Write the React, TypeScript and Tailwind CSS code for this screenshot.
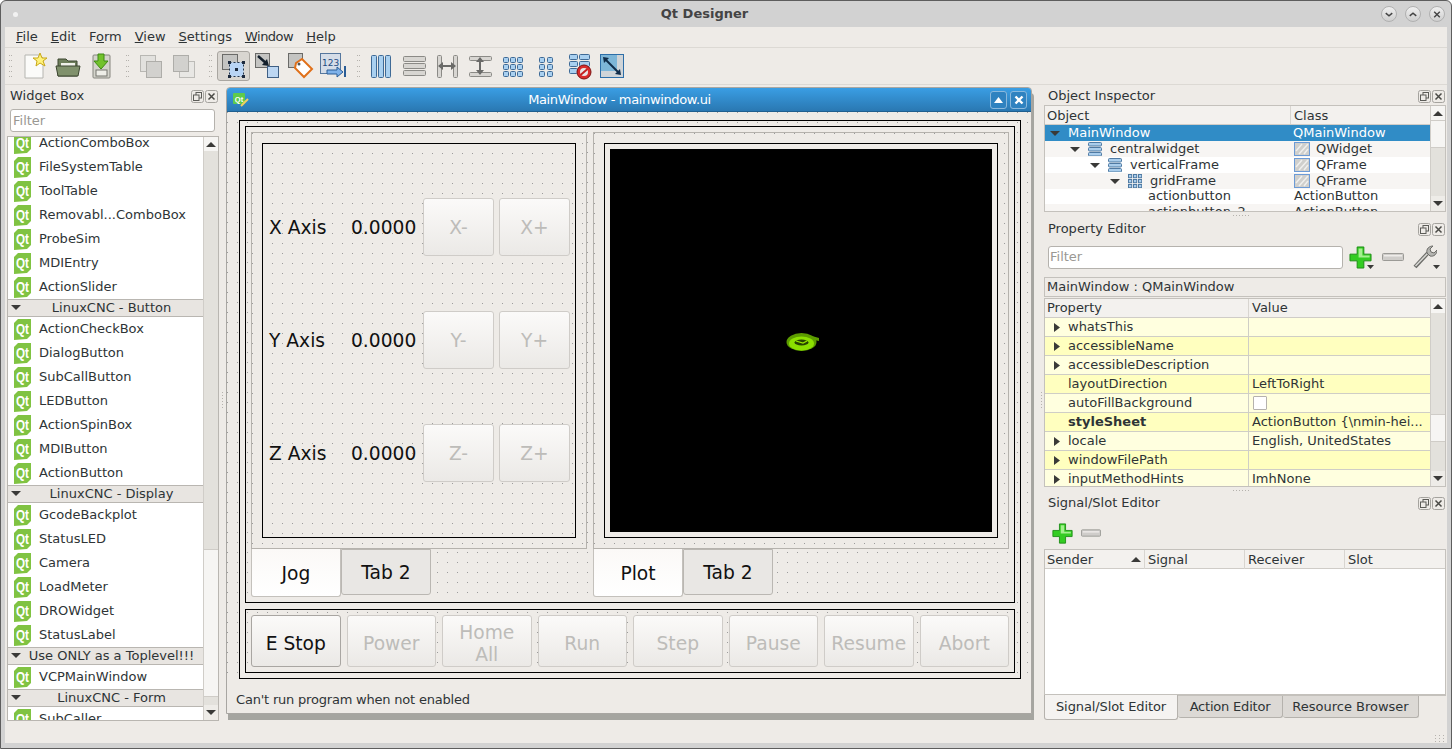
import type { ReactNode } from 'react';

const dots = 'bg-[radial-gradient(circle_at_0.5px_0.5px,#9c9c9c_0.6px,transparent_0.7px)] bg-[length:10px_10px]';

function QtIcon() {
  return (
    <svg width="17" height="21" viewBox="0 0 17 21" className="shrink-0">
      <polygon points="4,0 17,0 17,16 13,20 0,21 0,4" fill="#80c342" />
      <text x="8.5" y="15" textAnchor="middle" fontSize="14" fontWeight="700" fill="#fff" fontFamily="'Liberation Sans'" textLength="13" lengthAdjust="spacingAndGlyphs">Qt</text>
    </svg>
  );
}

function Tri({ dir = 'down' }: { dir?: 'down' | 'right' | 'up' }) {
  const pts = dir === 'down' ? '0,1 10,1 5,6' : dir === 'up' ? '0,6 10,6 5,1' : '2,0 8,4.5 2,9';
  return (
    <svg width="10" height={dir === 'right' ? 9 : 7} viewBox={dir === 'right' ? '0 0 10 9' : '0 0 10 7'} className="shrink-0">
      <polygon points={pts} fill="#3a3a38" />
    </svg>
  );
}

function DropTri() {
  return (
    <svg width="7" height="4" viewBox="0 0 7 4" className="shrink-0">
      <polygon points="0,0 7,0 3.500,4" fill="#3a3a38" />
    </svg>
  );
}

function DockTitle({ title, className }: { title: string; className: string }) {
  return (
    <div className={`flex items-center justify-between text-[13px] text-[#2e3436] ${className}`}>
      <span>{title}</span>
      <span className="flex gap-[1px]">
        <svg width="13" height="13" viewBox="0 0 13 13" fill="none" stroke="#5c5c58">
          <rect x="0.5" y="0.5" width="12" height="12" rx="2" stroke="#a5a39e" />
          <rect x="5" y="2.5" width="5.5" height="5.5" />
          <rect x="2.5" y="5" width="5.5" height="5.5" fill="#eeebe7" />
        </svg>
        <svg width="13" height="13" viewBox="0 0 13 13" fill="none" stroke="#4a4a46">
          <rect x="0.5" y="0.5" width="12" height="12" rx="2" stroke="#a5a39e" />
          <path d="M3.5 3.5l6 6M9.5 3.5l-6 6" strokeWidth="1.5" />
        </svg>
      </span>
    </div>
  );
}

function ScrollBar({ before, thumb, after }: { before: string; thumb: string; after: string }) {
  return (
    <div className="flex w-[15px] shrink-0 flex-col border-l border-[#d0cdc8] bg-[#e3e1dc]">
      <div className="flex h-[14px] shrink-0 items-center justify-center bg-[#f6f5f3]"><Tri dir="up" /></div>
      <div className={before} />
      <div className={`border-y border-[#cfccc7] bg-[#f6f5f3] ${thumb}`} />
      <div className={after} />
      <div className="flex h-[15px] shrink-0 items-center justify-center bg-[#eeece8]"><Tri /></div>
    </div>
  );
}

function WidgetRow({ name }: { name: string }) {
  return (
    <div className="flex h-[24px] shrink-0 items-center gap-[8px] pl-[6px]">
      <QtIcon />
      <span className="text-[13px] text-[#2e3436]">{name}</span>
    </div>
  );
}

function WidgetHeader({ name }: { name: string }) {
  return (
    <div className="relative flex h-[18px] shrink-0 items-center justify-center border-y border-[#b9b6b1] bg-[#e8e5e1] pl-[12px] text-[13px] text-[#2e3436]">
      <span className="absolute left-[3px] top-[4px]"><Tri /></span>
      <span>{name}</span>
    </div>
  );
}

function Page({ children }: { children: ReactNode }) {
  return <svg width="28" height="28" viewBox="0 0 28 28" className="shrink-0">{children}</svg>;
}

const sq = (x: number, y: number, s = 16) => (
  <rect x={x + 0.5} y={y + 0.5} width={s} height={s} fill="#c4c4c2" stroke="#6a6a68" />
);

const blueBlock = (x: number, y: number, w: number, h: number, k: number) => (
  <rect key={k} x={x + 0.5} y={y + 0.5} width={w} height={h} rx="1" fill="#a9d0f0" stroke="#3f6a96" />
);
const grayBar = (x: number, y: number, w: number, h: number, k: number) => (
  <rect key={k} x={x + 0.5} y={y + 0.5} width={w} height={h} rx="1" fill="#d8d6d2" stroke="#8b8a86" />
);

function PlusIcon({ size = 24 }: { size?: number }) {
  return (
    <svg width={size} height={size} viewBox="0 0 24 24" className="shrink-0">
      <path d="M8.5 1h7v7.5H23v7h-7.5V23h-7v-7.5H1v-7h7.5z" fill="#33cc22" stroke="#1c8c14" />
      <path d="M10 2.5h4V10h7.500v2H10z" fill="#a4f08e" />
    </svg>
  );
}

function MinusIcon({ w = 22 }: { w?: number }) {
  return (
    <svg width={w} height="8" viewBox="0 0 22 8" className="shrink-0">
      <rect x="0.500" y="0.500" width="21" height="7" rx="1" fill="#cfcdca" stroke="#9b9a96" />
      <rect x="2" y="2" width="18" height="1.500" fill="#eeece9" />
    </svg>
  );
}

function Grip({ className }: { className: string }) {
  return (
    <div className={`grid h-[22px] w-[4px] shrink-0 grid-cols-2 content-between ${className}`}>
      {[0, 1, 2, 3, 4, 5, 6, 7, 8, 9].map((i) => <span key={i} className="h-[1px] w-[1px] bg-[#b5b2ad]" />)}
    </div>
  );
}

function Toolbar() {
  const slot = (el: ReactNode, sel = false) => (
    <div className={`flex h-[30px] w-[33px] shrink-0 items-center justify-center rounded-[3px] ${sel ? 'border border-[#a9a6a1] bg-[#d9d6d1]' : ''}`}>{el}</div>
  );
  return (
    <div className="flex h-[38px] shrink-0 items-center border-y border-[#dcd9d4]">
      <Grip className="ml-[4px] mr-[5px]" />
      {slot(<Page>
        <path d="M4 3h15l3 3v20H4z" fill="#fbfbf9" stroke="#b5b5b0" />
        <polygon points="19,1 21,6 26,6 22,9 24,14 19,11 15,14 16,9 12,6 17,6" fill="#fff27a" stroke="#c9a818" />
      </Page>)}
      {slot(<Page>
        <path d="M4 7h8l2 2h9v15H4z" fill="#6f7f5c" stroke="#3c4630" />
        <rect x="7" y="11" width="14" height="4" fill="#f0f0ea" />
        <path d="M2 14h24l-2 10H4z" fill="#80916c" stroke="#3c4630" />
      </Page>)}
      {slot(<Page>
        <rect x="6" y="3" width="17" height="23" rx="1" fill="#d3d3cb" stroke="#85857e" />
        <rect x="9" y="18" width="11" height="6" fill="#eeeee8" stroke="#75756e" />
        <path d="M11 2h6v7h4l-7 8-7-8h4z" fill="#72c22c" stroke="#3d8a12" />
      </Page>)}
      <Grip className="ml-[9px] mr-[4px]" />
      {slot(<Page><rect x="3.500" y="3.500" width="15" height="16" fill="#e2e1de" stroke="#b8b7b3" /><rect x="9.500" y="9.500" width="15" height="16" fill="#d2d1ce" stroke="#aeada9" /></Page>)}
      {slot(<Page><rect x="9.500" y="9.500" width="15" height="16" fill="#e8e7e4" stroke="#bcbbb7" /><rect x="3.500" y="3.500" width="15" height="16" fill="#d2d1ce" stroke="#aeada9" /></Page>)}
      <Grip className="ml-[9px] mr-[4px]" />
      {slot(<Page>
        {sq(2, 2, 15)}
        <rect x="9.500" y="10.500" width="14" height="14" fill="#b8d4f5" stroke="#24364f" strokeDasharray="2 2" />
        <rect x="8" y="9" width="3" height="3" fill="#1d2a3e" /><rect x="22" y="9" width="3" height="3" fill="#1d2a3e" /><rect x="8" y="23" width="3" height="3" fill="#1d2a3e" /><rect x="22" y="23" width="3" height="3" fill="#1d2a3e" /><rect x="15" y="16" width="3" height="3" fill="#1d2a3e" />
      </Page>, true)}
      {slot(<Page>
        {sq(2, 1, 14)}
        <rect x="14.500" y="14.500" width="11" height="11" fill="#bcd6f2" stroke="#3f5f84" />
        <path d="M5 4l9 8" stroke="#14202c" strokeWidth="2.500" /><polygon points="16,14 9,13 14,7" fill="#14202c" />
      </Page>)}
      {slot(<Page>
        {sq(2, 1, 14)}
        <path d="M10 11l6-4 10 10-8 8-9-9z" fill="#fff" stroke="#e0701a" strokeWidth="2" />
        <circle cx="13" cy="12" r="1.500" fill="#555" />
      </Page>)}
      {slot(<Page>
        <rect x="1.500" y="1.500" width="20" height="20" fill="#d5dde8" stroke="#56779e" />
        <text x="3" y="14" fontSize="9" fill="#1f4a80" fontFamily="'DejaVu Sans'">123</text>
        <path d="M8 18h10v-3l6 5-6 5v-3H8z" fill="#7fb2ea" stroke="#2a5d96" />
        <rect x="25" y="14" width="2" height="11" fill="#2a5d96" />
      </Page>)}
      <Grip className="ml-[8px] mr-[3px]" />
      {slot(<Page>{[4, 11, 18].map((x, k) => blueBlock(x, 3, 5, 22, k))}</Page>)}
      {slot(<Page>{[4, 11, 18].map((y, k) => grayBar(3, y, 22, 5, k))}</Page>)}
      {slot(<Page>
        {grayBar(4, 3, 4, 22, 0)}{grayBar(20, 3, 4, 22, 1)}
        <path d="M5 14l5-4v3h8v-3l5 4-5 4v-3h-8v3z" fill="#6a6a68" />
      </Page>)}
      {slot(<Page>
        {grayBar(3, 4, 22, 4, 0)}{grayBar(3, 20, 22, 4, 1)}
        <path d="M14 5l4 5h-3v8h3l-4 5-4-5h3v-8h-3z" fill="#6a6a68" />
      </Page>)}
      {slot(<Page>{[4, 11, 18].flatMap((x, i) => [5, 12, 19].map((y, j) => blueBlock(x, y, 5, 5, i * 3 + j)))}</Page>)}
      {slot(<Page>{[7, 15].flatMap((x, i) => [5, 12, 19].map((y, j) => blueBlock(x, y, 5, 5, i * 3 + j)))}</Page>)}
      {slot(<Page>
        {blueBlock(4, 2, 8, 5, 0)}{blueBlock(14, 2, 10, 5, 1)}{blueBlock(4, 9, 8, 5, 2)}{blueBlock(14, 9, 10, 5, 3)}{blueBlock(4, 16, 8, 5, 4)}
        <circle cx="19" cy="20" r="7" fill="#d92c2c" stroke="#7c1414" />
        <circle cx="19" cy="20" r="4" fill="#e8e8e8" />
        <path d="M15.500 23l7-6" stroke="#c42020" strokeWidth="2" />
      </Page>)}
      {slot(<Page>
        <rect x="2.500" y="2.500" width="23" height="23" fill="#cfd4d8" stroke="#2d6ea8" />
        <rect x="3" y="3" width="16" height="16" fill="#7db6d8" />
        <path d="M7 7l14 14" stroke="#102c4a" strokeWidth="2" />
        <polygon points="5,5 11,6 6,11" fill="#102c4a" /><polygon points="23,23 17,22 22,17" fill="#102c4a" />
      </Page>)}
    </div>
  );
}

function AxisRow({ axis }: { axis: string }) {
  return (
    <div className="flex h-[58px] items-center pl-[6px]">
      <span className="w-[82px] pt-[1px] text-[#111]">{axis} Axis</span>
      <span className="w-[72px] pt-[1px] text-[#111]">0.0000</span>
      <FormButton className="h-[58px] w-[71px] pt-[2px]" disabled>{axis}-</FormButton>
      <FormButton className="ml-[5px] h-[58px] w-[71px] pt-[2px]" disabled>{axis}+</FormButton>
    </div>
  );
}

function FormButton({ children, className, disabled }: { children: ReactNode; className: string; disabled?: boolean }) {
  return (
    <div className={`flex items-center justify-center rounded-[3px] border bg-gradient-to-b from-[#fbfaf9] to-[#ebe9e6] text-center leading-[22px] ${disabled ? 'border-[#cfccc8] text-[#bdbcb9]' : 'border-[#a9a6a2] text-[#111]'} ${className}`}>
      {children}
    </div>
  );
}

function FormTabs({ first }: { first: string }) {
  return (
    <div className="flex h-[48px] text-[#111]">
      <div className="flex h-[48px] w-[90px] items-center justify-center rounded-b-[3px] border-x border-b border-[#c4c1bc] bg-gradient-to-b from-[#fbf9f7] to-white pt-[2px]">{first}</div>
      <div className="flex h-[46px] w-[90px] items-center justify-center rounded-b-[3px] border border-[#bab7b2] bg-[#e9e7e4] pt-[2px]">Tab 2</div>
    </div>
  );
}

function MdiWindow() {
  return (
    <div className="flex h-[627px] w-[806px] flex-col rounded-t-[4px] border border-[#a8a6a2] bg-[#eeebe7] shadow-[2px_6px_0_#a5a5a0]">
      <div className="flex h-[24px] shrink-0 items-center rounded-t-[3px] border-b border-[#1f5f8f] bg-gradient-to-b from-[#3a9ee4] to-[#2a78b2] pl-[6px] pr-[4px]">
        <svg width="16" height="14" viewBox="0 0 16 14" className="shrink-0">
          <rect x="0" y="0" width="12" height="11" rx="1" fill="#5ecb4c" />
          <text x="6" y="8.500" textAnchor="middle" fontSize="7.500" fontWeight="700" fill="#fff" fontFamily="'Liberation Sans'">Qt</text>
          <path d="M8 13l7-7" stroke="#f0d060" strokeWidth="2" />
        </svg>
        <span className="flex-1 text-center text-[13px] tracking-[-0.35px] text-white">MainWindow - mainwindow.ui</span>
        <span className="flex h-[18px] w-[17px] items-center justify-center rounded-[3px] border border-[#8ab8dc] bg-[#2f82c0]">
          <svg width="9" height="6" viewBox="0 0 9 6"><polygon points="0,6 9,6 4.500,0" fill="#fff" /></svg>
        </span>
        <span className="ml-[3px] flex h-[18px] w-[17px] items-center justify-center rounded-[3px] border border-[#8ab8dc] bg-[#2f82c0]">
          <svg width="10" height="10" viewBox="0 0 10 10"><path d="M1.500 1.500l7 7M8.500 1.500l-7 7" stroke="#fff" strokeWidth="2.400" /></svg>
        </span>
      </div>
      <div className={`h-[570px] shrink-0 pl-[12px] pr-[10px] pt-[8px] ${dots}`}>
        <div className="flex h-[559px] flex-col gap-[6px] border border-black p-[5px] text-[18.67px]">
          <div className="flex h-[477px] shrink-0 gap-[6px] border border-black px-[5px] pt-[5px]">
            <div className="flex w-[336px] flex-col">
              <div className={`h-[417px] border border-[#b5b2ad] bg-[#eeebe7] p-[10px] ${dots}`}>
                <div className="flex h-full flex-col gap-[55px] border border-black pt-[54px]">
                  <AxisRow axis="X" />
                  <AxisRow axis="Y" />
                  <AxisRow axis="Z" />
                </div>
              </div>
              <FormTabs first="Jog" />
            </div>
            <div className="flex w-[416px] flex-col">
              <div className={`h-[417px] border border-[#b5b2ad] bg-[#eeebe7] p-[10px] ${dots}`}>
                <div className="flex h-full items-center justify-center border border-black bg-[#eeebe7] p-[5px]">
                  <div className="flex h-full w-full items-center justify-center bg-black">
                    <svg width="34" height="20" viewBox="0 0 34 20" className="ml-[4px] mt-[2px]">
                      <ellipse cx="15.500" cy="10" rx="15" ry="9" fill="#5c9c00" />
                      <path d="M26 4l7 2v3l-5-1z" fill="#5c9c00" />
                      <ellipse cx="15.500" cy="11.500" rx="12.500" ry="7" fill="#8be000" />
                      <ellipse cx="15.500" cy="10.500" rx="7" ry="3" fill="#264400" />
                      <path d="M10 9l7 2 4-2" stroke="#9ae800" strokeWidth="1.200" fill="none" />
                    </svg>
                  </div>
                </div>
              </div>
              <FormTabs first="Plot" />
            </div>
          </div>
          <div className="flex h-[64px] shrink-0 gap-[6px] border border-black p-[5px]">
            <FormButton className="flex-1 pt-[5px]">E Stop</FormButton>
            {['Power', 'Home\nAll', 'Run', 'Step', 'Pause', 'Resume', 'Abort'].map((t) => (
              <FormButton key={t} className="flex-1 whitespace-pre-line pt-[5px]" disabled>{t}</FormButton>
            ))}
          </div>
        </div>
      </div>
      <div className="pl-[9px] pt-[9px] text-[13px] leading-[18px] tracking-[-0.2px] text-[#2e3436]">Can't run program when not enabled</div>
    </div>
  );
}

function TreeIcon({ kind }: { kind: 'v' | 'g' }) {
  if (kind === 'v') {
    return (
      <svg width="14" height="14" viewBox="0 0 14 14" className="shrink-0">
        {[0, 5, 10].map((y) => <rect key={y} x="0.500" y={y + 0.500} width="13" height="3.500" rx="1" fill="#a9cdec" stroke="#4f7aa3" />)}
      </svg>
    );
  }
  return (
    <svg width="14" height="14" viewBox="0 0 14 14" className="shrink-0">
      {[0, 5, 10].flatMap((x) => [0, 5, 10].map((y) => <rect key={`${x}${y}`} x={x + 0.500} y={y + 0.500} width="3.200" height="3.200" fill="#a9cdec" stroke="#4f7aa3" />))}
    </svg>
  );
}

function ClassCell({ name }: { name: string }) {
  return (
    <div className="flex flex-1 items-center gap-[6px] pl-[3px]">
      <svg width="16" height="14" viewBox="0 0 16 14" className="shrink-0">
        <rect x="0.500" y="0.500" width="15" height="13" fill="#cfcfcc" stroke="#6c9bd6" />
        <path d="M2 9l6-7M5 12l9-10M10 12l4-5" stroke="#efefed" strokeWidth="1.500" />
      </svg>
      <span>{name}</span>
    </div>
  );
}

function PropRow({ name, value, arrow, alt, bold, check }: { name: string; value?: string; arrow?: boolean; alt?: boolean; bold?: boolean; check?: boolean }) {
  return (
    <div className={`flex h-[19px] shrink-0 items-center border-b border-[#cfcec6] text-[13px] text-[#2e3436] ${alt ? 'bg-[#ffffbf]' : 'bg-[#ffffdf]'}`}>
      <div className={`flex h-full w-[204px] shrink-0 items-center border-r border-[#cfcec6] pl-[7px] ${bold ? 'font-bold' : ''}`}>
        <span className="flex w-[16px] shrink-0">{arrow && <Tri dir="right" />}</span>
        <span>{name}</span>
      </div>
      <div className="flex flex-1 items-center pl-[3px]">
        {check ? <span className="ml-[1px] h-[14px] w-[14px] rounded-[1px] border border-[#b5b2ad] bg-white" /> : value}
      </div>
    </div>
  );
}

function HHandle() {
  return (
    <div className="flex h-[6px] shrink-0 items-center justify-center gap-[2px] pr-[8px]">
      {[0, 1, 2, 3, 4, 5].map((i) => <span key={i} className="h-[1px] w-[1px] bg-[#b5b2ad]" />)}
    </div>
  );
}

function VHandle() {
  return (
    <div className="flex flex-col items-center justify-center gap-[2px] pb-[28px]">
      {[0, 1, 2, 3, 4, 5].map((i) => <span key={i} className="h-[1px] w-[1px] bg-[#b5b2ad]" />)}
    </div>
  );
}

function RightDocks() {
  return (
    <div className="flex w-[402px] flex-col">
      <DockTitle title="Object Inspector" className="h-[20px] pl-[4px] pr-[1px] pt-[2px]" />
      <div className="flex h-[107px] border border-[#c4c1bc] bg-white text-[13px] text-[#2e3436]">
        <div className="flex min-w-0 flex-1 flex-col overflow-hidden">
          <div className="flex h-[19px] shrink-0 border-b border-[#cfccc7] bg-[#f3f1ee]">
            <span className="w-[246px] border-r border-[#d8d5d0] pl-[2px]">Object</span>
            <span className="pl-[3px]">Class</span>
          </div>
          <div className="flex h-[16px] shrink-0 items-center bg-[#308cc6] text-white">
            <div className="flex w-[246px] items-center pl-[5px]"><Tri /><span className="pl-[8px]">MainWindow</span></div>
            <span className="pl-[2px]">QMainWindow</span>
          </div>
          <div className="flex h-[16px] shrink-0 items-center bg-[#f7f5f3]">
            <div className="flex w-[246px] items-center gap-[8px] pl-[25px]"><Tri /><TreeIcon kind="v" /><span>centralwidget</span></div>
            <ClassCell name="QWidget" />
          </div>
          <div className="flex h-[16px] shrink-0 items-center">
            <div className="flex w-[246px] items-center gap-[8px] pl-[45px]"><Tri /><TreeIcon kind="v" /><span>verticalFrame</span></div>
            <ClassCell name="QFrame" />
          </div>
          <div className="flex h-[16px] shrink-0 items-center bg-[#f7f5f3]">
            <div className="flex w-[246px] items-center gap-[8px] pl-[65px]"><Tri /><TreeIcon kind="g" /><span>gridFrame</span></div>
            <ClassCell name="QFrame" />
          </div>
          <div className="flex h-[15px] shrink-0 items-center pb-[2px]">
            <span className="w-[246px] pl-[103px]">actionbutton</span>
            <span className="pl-[3px]">ActionButton</span>
          </div>
          <div className="flex h-[15px] shrink-0 items-center bg-[#f7f5f3]">
            <span className="w-[246px] pl-[103px]">actionbutton_2</span>
            <span className="pl-[3px]">ActionButton</span>
          </div>
        </div>
        <ScrollBar before="h-0" thumb="h-[28px]" after="flex-1" />
      </div>
      <HHandle />
      <DockTitle title="Property Editor" className="h-[20px] pl-[4px] pr-[1px] pt-[2px]" />
      <div className="mt-[7px] flex h-[24px] items-center pl-[4px]">
        <div className="flex h-[23px] w-[295px] items-center rounded-[3px] border border-[#b5b2ad] bg-white pl-[1px] text-[13px] text-[#9a9893]">Filter</div>
        <span className="ml-[6px] flex items-end"><PlusIcon size={23} /><span className="-ml-[5px]"><DropTri /></span></span>
        <span className="ml-[8px]"><MinusIcon /></span>
        <span className="ml-[9px] flex items-end">
          <svg width="24" height="24" viewBox="0 0 24 24">
            <path d="M2 22L15 8" stroke="#6c6c68" strokeWidth="4" />
            <path d="M2.500 21L15 8" stroke="#d8d8d4" strokeWidth="1.500" />
            <path d="M14 8c-1-4 2-7 6-7l-3 3 1 3 3 1 3-3c0 4-3 7-7 6z" fill="#b5b5b1" stroke="#6c6c68" />
          </svg>
          <span className="-ml-[4px]"><DropTri /></span>
        </span>
      </div>
      <div className="mt-[8px] flex h-[20px] shrink-0 items-center border border-[#c4c1bc] pl-[2px] text-[13px] text-[#2e3436]">MainWindow : QMainWindow</div>
      <div className="mt-[1px] flex h-[189px] border border-[#c4c1bc] bg-white">
        <div className="flex min-w-0 flex-1 flex-col overflow-hidden">
          <div className="flex h-[19px] shrink-0 border-b border-[#cfccc7] bg-[#f3f1ee] text-[13px] leading-[18px] text-[#2e3436]">
            <span className="w-[204px] border-r border-[#d8d5d0] pl-[2px]">Property</span>
            <span className="pl-[3px]">Value</span>
          </div>
          <PropRow name="whatsThis" arrow />
          <PropRow name="accessibleName" arrow alt />
          <PropRow name="accessibleDescription" arrow />
          <PropRow name="layoutDirection" value="LeftToRight" alt />
          <PropRow name="autoFillBackground" check />
          <PropRow name="styleSheet" value="ActionButton {\nmin-hei..." alt bold />
          <PropRow name="locale" value="English, UnitedStates" arrow />
          <PropRow name="windowFilePath" arrow alt />
          <PropRow name="inputMethodHints" value="ImhNone" arrow />
        </div>
        <ScrollBar before="h-[101px]" thumb="h-[28px]" after="flex-1" />
      </div>
      <HHandle />
      <DockTitle title="Signal/Slot Editor" className="h-[20px] pl-[4px] pr-[1px]" />
      <div className="mt-[5px] flex h-[30px] items-center gap-[8px] pl-[8px]">
        <PlusIcon size={21} />
        <MinusIcon w={20} />
      </div>
      <div className="mt-[1px] flex h-[146px] flex-col border border-[#c4c1bc] bg-white text-[13px] text-[#2e3436]">
        <div className="flex h-[19px] shrink-0 items-center border-b border-[#cfccc7] bg-[#f3f1ee] pt-[1px]">
          <span className="flex w-[100px] items-center justify-between border-r border-[#d8d5d0] pl-[2px] pr-[3px]">Sender <Tri dir="up" /></span>
          <span className="w-[100px] border-r border-[#d8d5d0] pl-[3px]">Signal</span>
          <span className="w-[100px] border-r border-[#d8d5d0] pl-[3px]">Receiver</span>
          <span className="pl-[3px]">Slot</span>
        </div>
      </div>
      <div className="flex h-[25px] border-t border-[#c4c1bc] text-[13px] text-[#2e3436]">
        <div className="-mt-[1px] flex h-[25px] w-[134px] items-center justify-center rounded-b-[3px] border-x border-b border-[#b5b2ad] bg-[#f5f3f1] tracking-[-0.1px]">Signal/Slot Editor</div>
        <div className="flex h-[22px] w-[105px] items-center justify-center rounded-b-[3px] border-b border-r border-[#b5b2ad] bg-[#dcd9d5] tracking-[-0.2px]">Action Editor</div>
        <div className="flex h-[22px] w-[136px] items-center justify-center rounded-b-[3px] border-b border-r border-[#b5b2ad] bg-[#dcd9d5]">Resource Browser</div>
      </div>
    </div>
  );
}

export default function App() {
  const section1 = ['ActionComboBox', 'FileSystemTable', 'ToolTable', 'Removabl...ComboBox', 'ProbeSim', 'MDIEntry', 'ActionSlider'];
  const section2 = ['ActionCheckBox', 'DialogButton', 'SubCallButton', 'LEDButton', 'ActionSpinBox', 'MDIButton', 'ActionButton'];
  const section3 = ['GcodeBackplot', 'StatusLED', 'Camera', 'LoadMeter', 'DROWidget', 'StatusLabel'];

  return (
    <div className="flex h-[749px] w-[1452px] flex-col overflow-hidden rounded-t-[6px] border border-[#5d5d5d] bg-[#d2d2d2] font-['DejaVu_Sans',sans-serif]">
      <div className="flex h-[26px] shrink-0 items-center">
        <span className="ml-[12px] h-[5px] w-[5px] rounded-full bg-[#f2f2f2]" />
        <span className="flex-1 pl-[10px] text-center text-[13px] font-bold text-[#444]">Qt Designer</span>
        <div className="mr-[6px] flex gap-[8px]">
          {['M4 6l3.500 3 3.500-3', 'M4 9l3.500-3 3.500 3', 'M4.500 4.500l6 6M10.500 4.500l-6 6'].map((d) => (
            <span key={d} className="flex h-[16px] w-[16px] items-center justify-center rounded-full border border-[#b0b0b0] bg-gradient-to-b from-[#f0f0f0] to-[#cfcfcf]">
              <svg width="15" height="15" viewBox="0 0 15 15" fill="none" stroke="#444" strokeWidth="1.500"><path d={d} /></svg>
            </span>
          ))}
        </div>
      </div>
      <div className="mx-[4px] flex h-[716px] shrink-0 flex-col bg-[#eeebe7]">
        <div className="flex h-[20px] shrink-0 items-center pl-[11px] text-[13px] text-[#2e3436]">
          <span className="mr-[13px]"><u>F</u>ile</span>
          <span className="mr-[13px]"><u>E</u>dit</span>
          <span className="mr-[13px]">F<u>o</u>rm</span>
          <span className="mr-[13px]"><u>V</u>iew</span>
          <span className="mr-[13px]"><u>S</u>ettings</span>
          <span className="mr-[13px] tracking-[-0.5px]"><u>W</u>indow</span>
          <span><u>H</u>elp</span>
        </div>
        <Toolbar />
        <div className="flex min-h-0 flex-1">
          <div className="flex w-[217px] shrink-0 flex-col">
            <DockTitle title="Widget Box" className="mt-[1px] h-[20px] pl-[5px] pr-[4px]" />
            <div className="ml-[5px] mt-[3px] flex h-[23px] w-[205px] shrink-0 items-center rounded-[3px] border border-[#b5b2ad] bg-white pl-[2px] text-[13px] text-[#9a9893]">Filter</div>
            <div className="ml-[2px] mt-[4px] flex h-[585px] w-[212px] border border-[#b9b6b1] bg-white">
              <div className="min-w-0 flex-1 overflow-hidden">
                <div className="-mt-[6px] flex flex-col">
                  {section1.map((n) => <WidgetRow key={n} name={n} />)}
                  <WidgetHeader name="LinuxCNC - Button" />
                  {section2.map((n) => <WidgetRow key={n} name={n} />)}
                  <WidgetHeader name="LinuxCNC - Display" />
                  {section3.map((n) => <WidgetRow key={n} name={n} />)}
                  <WidgetHeader name="Use ONLY as a Toplevel!!!" />
                  <WidgetRow name="VCPMainWindow" />
                  <WidgetHeader name="LinuxCNC - Form" />
                  <WidgetRow name="SubCaller" />
                </div>
              </div>
              <ScrollBar before="h-[398px]" thumb="h-[148px]" after="flex-1" />
            </div>
          </div>
          <div className="flex w-[4px] shrink-0 justify-start"><VHandle /></div>
          <div className="flex w-[810px] shrink-0 flex-col pt-[2px]">
            <MdiWindow />
          </div>
          <div className="flex w-[8px] shrink-0 justify-end pr-[2px]"><VHandle /></div>
          <div className="flex flex-col">
            <RightDocks />
            <div className="flex flex-1 items-end justify-end pb-[1px] pr-[1px]">
              <div className="grid h-[12px] w-[10px] grid-cols-3 content-end gap-[2px]">
                {[0, 1, 2, 3, 4, 5, 6, 7, 8].map((i) => <span key={i} className="h-[1px] w-[1px] bg-[#b5b2ad]" />)}
              </div>
            </div>
          </div>
        </div>
      </div>
    </div>
  );
}
